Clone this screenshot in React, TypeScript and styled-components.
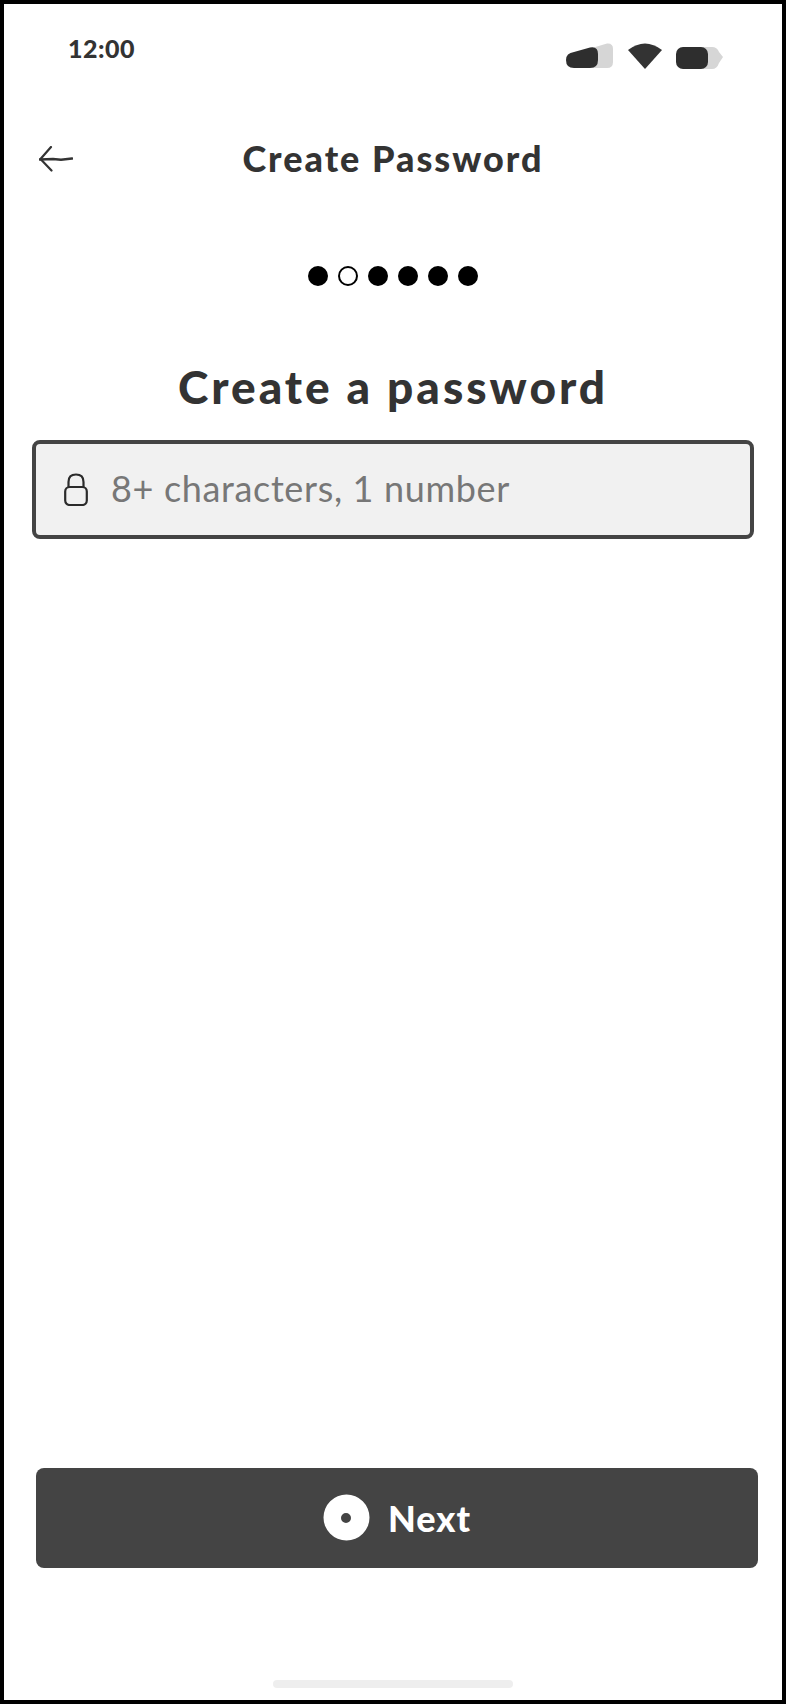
import styled, { createGlobalStyle } from 'styled-components';

const GlobalStyle = createGlobalStyle`
  html, body {
    margin: 0;
    padding: 0;
    background: #fff;
  }
  * {
    box-sizing: border-box;
  }
`;

const FONT = `Lato, "Noto Sans", sans-serif`;
const STEPS = [true, false, true, true, true, true];

const SignalIcon = () => (
  <svg width="48" height="26" viewBox="0 0 48 26">
    <path d="M26 5 L41 0.5 Q47 0 47 6 V19 Q47 25 41 25 H20 Z" fill="#d6d6d6" />
    <path d="M8 9 L24 4.5 Q32 3 32 11 V17 Q32 25 24 25 H8 Q0 25 0 17 Q0 10 8 9 Z" fill="#2e2e2e" />
  </svg>
);

const WifiIcon = () => (
  <svg width="34" height="26" viewBox="0 0 34 26">
    <path d="M0 7 Q17 -6 34 7 L17 26 Z" fill="#333" />
  </svg>
);

const BatteryIcon = () => (
  <svg width="47" height="24" viewBox="0 0 47 24">
    <path d="M20 2 H36 Q41 2 43 7 L47 12 L43 18 Q41 24 36 24 H20 Z" fill="#d6d6d6" />
    <rect x="0" y="2" width="32" height="22" rx="7" fill="#2e2e2e" />
  </svg>
);

const BackArrow = () => (
  <svg width="34" height="26" viewBox="0 0 34 26" fill="none" stroke="#333" strokeLinecap="round">
    <path d="M1 13.5 L14 13 L22 13.8 L33 12.5" strokeWidth="2.6" />
    <path d="M12 1 L1.5 13 L12.5 24.5" strokeWidth="2.2" />
  </svg>
);

const LockIcon = () => (
  <svg width="24" height="33" viewBox="0 0 24 33" fill="none" stroke="#2b2b2b" strokeWidth="2.2">
    <path d="M4.5 14 V9 Q4.5 1.5 12 1.5 Q19.5 1.5 19.5 9 V14" />
    <rect x="1.2" y="14" width="21.6" height="18" rx="4.5" />
  </svg>
);

const NextIcon = () => (
  <svg width="47" height="47" viewBox="0 0 47 47">
    <path fillRule="evenodd" fill="#fff" d="M23.5 0.5 A23 23 0 1 1 23.5 46.5 A23 23 0 1 1 23.5 0.5 Z M23 19 A5 5 0 1 0 23 29 A5 5 0 1 0 23 19 Z" />
  </svg>
);

const App = () => {
  return (
    <>
      <GlobalStyle />
      <Frame>
        <StatusBar>
          <Clock>12:00</Clock>
          <StatusIcons>
            <SignalIcon />
            <WifiIcon />
            <BatteryIcon />
          </StatusIcons>
        </StatusBar>
        <Header>
          <BackButton aria-label="Back">
            <BackArrow />
          </BackButton>
          <Title>Create Password</Title>
        </Header>
        <Steps>
          {STEPS.map((filled, i) => (
            <Step key={i} $filled={filled} />
          ))}
        </Steps>
        <Heading>Create a password</Heading>
        <PasswordField>
          <LockIcon />
          <FieldInput type="password" placeholder="8+ characters, 1 number" />
        </PasswordField>
        <Spacer />
        <NextButton>
          <NextIcon />
          Next
        </NextButton>
        <HomeIndicator />
      </Frame>
    </>
  );
};

const Frame = styled.div`
  width: 786px;
  height: 1704px;
  border: 4px solid #000;
  background: #fff;
  display: flex;
  flex-direction: column;
  font-family: ${FONT};
  color: #333;
  overflow: hidden;
`;

const StatusBar = styled.div`
  height: 96px;
  padding: 33px 59px 0 64px;
  display: flex;
  justify-content: space-between;
  align-items: flex-start;
`;

const Clock = styled.div`
  font-size: 25px;
  font-weight: 900;
  line-height: 22px;
  letter-spacing: 0.5px;
`;

const StatusIcons = styled.div`
  display: flex;
  align-items: flex-end;
  gap: 14px;
  height: 32px;
`;

const Header = styled.div`
  height: 118px;
  display: grid;
  grid-template-columns: 1fr auto 1fr;
  align-items: center;
  padding: 0 35px;
`;

const BackButton = styled.button`
  justify-self: start;
  display: flex;
  padding: 0;
  border: none;
  background: none;
`;

const Title = styled.div`
  font-size: 36px;
  font-weight: 900;
  line-height: 44px;
  letter-spacing: 2px;
  padding-bottom: 2px;
`;

const Steps = styled.div`
  margin-top: 48px;
  display: flex;
  justify-content: center;
  gap: 10px;
`;

const Step = styled.span<{ $filled: boolean }>`
  width: 20px;
  height: 20px;
  border-radius: 50%;
  border: 2px solid #000;
  background: ${(p) => (p.$filled ? '#000' : '#fff')};
`;

const Heading = styled.h1`
  margin: 71px 0 0;
  height: 60px;
  font-size: 46px;
  font-weight: 900;
  line-height: 60px;
  letter-spacing: 3px;
  text-align: center;
`;

const PasswordField = styled.div`
  margin: 23px 28px 0;
  height: 99px;
  padding: 0 28px;
  border: 4px solid #444;
  border-radius: 8px;
  background: #f1f1f1;
  display: flex;
  align-items: center;
  gap: 23px;
`;

const FieldInput = styled.input`
  flex: 1;
  min-width: 0;
  border: none;
  outline: none;
  background: none;
  padding: 0 0 3px;
  font-family: ${FONT};
  font-size: 36px;
  letter-spacing: 0.65px;
  color: #777;

  &::placeholder {
    color: #777;
    opacity: 1;
  }
`;

const Spacer = styled.div`
  flex: 1;
`;

const NextButton = styled.button`
  margin: 0 24px 0 32px;
  height: 100px;
  border: none;
  border-radius: 8px;
  background: #444;
  color: #fff;
  font-family: ${FONT};
  font-size: 36px;
  font-weight: 900;
  letter-spacing: 1px;
  line-height: 42px;
  padding-bottom: 2px;
  display: flex;
  align-items: center;
  justify-content: center;
  gap: 18px;
`;

const HomeIndicator = styled.div`
  width: 240px;
  height: 8px;
  margin: 112px auto 12px;
  border-radius: 4px;
  background: #eee;
`;

export default App;
